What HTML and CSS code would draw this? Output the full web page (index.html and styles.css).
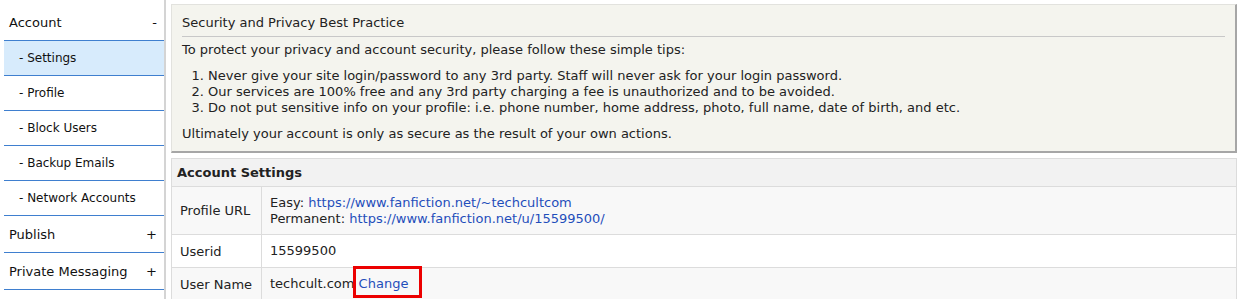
FILE: index.html
```html
<!DOCTYPE html>
<html>
<head>
<meta charset="utf-8">
<link rel="stylesheet" href="styles.css">
</head>
<body>
<div class="page">
  <nav class="sidebar">
    <div class="nav-item top first"><span>Account</span><span class="tog">-</span></div>
    <div class="nav-item sub active"><span>- Settings</span></div>
    <div class="nav-item sub"><span>- Profile</span></div>
    <div class="nav-item sub"><span>- Block Users</span></div>
    <div class="nav-item sub"><span>- Backup Emails</span></div>
    <div class="nav-item sub"><span>- Network Accounts</span></div>
    <div class="nav-item top"><span>Publish</span><span class="tog">+</span></div>
    <div class="nav-item top"><span>Private Messaging</span><span class="tog">+</span></div>
  </nav>
  <main class="main">
    <section class="notice">
      <div class="notice-title">Security and Privacy Best Practice</div>
      <p class="intro">To protect your privacy and account security, please follow these simple tips:</p>
      <ol class="tips">
        <li>Never give your site login/password to any 3rd party. Staff will never ask for your login password.</li>
        <li>Our services are 100% free and any 3rd party charging a fee is unauthorized and to be avoided.</li>
        <li>Do not put sensitive info on your profile: i.e. phone number, home address, photo, full name, date of birth, and etc.</li>
      </ol>
      <p class="outro">Ultimately your account is only as secure as the result of your own actions.</p>
    </section>
    <table class="settings">
      <tr class="head"><th colspan="2">Account Settings</th></tr>
      <tr class="alt">
        <td class="label">Profile URL</td>
        <td class="value">Easy: <a href="#">https://www.fanfiction.net/~techcultcom</a><br>Permanent: <a href="#">https://www.fanfiction.net/u/15599500/</a></td>
      </tr>
      <tr>
        <td class="label">Userid</td>
        <td class="value">15599500</td>
      </tr>
      <tr class="alt">
        <td class="label">User Name</td>
        <td class="value">techcult.com <a href="#" class="highlight">Change</a></td>
      </tr>
    </table>
  </main>
</div>
</body>
</html>
```
FILE: styles.css
```css
* { box-sizing: border-box; }
html, body { margin: 0; padding: 0; background: #fff; }
body {
  font-family: "DejaVu Sans", Verdana, sans-serif;
  font-size: 12px;
  color: #222;
  overflow: hidden;
}
.page {
  display: flex;
  align-items: flex-start;
}
.sidebar {
  width: 166px;
  flex: none;
  padding: 4px 0 0 4px;
  border-right: 2px solid #d4d4d4;
  min-height: 299px;
}
.nav-item {
  display: flex;
  justify-content: space-between;
  align-items: center;
  border-bottom: 1px solid #3f7fcf;
  color: #111;
}
.nav-item.top {
  height: 37px;
  padding: 0 7px 0 5px;
  font-size: 13px;
}
.nav-item.sub {
  height: 35px;
  padding-left: 15px;
}
.nav-item.active { background: #d7ebfc; }
.tog { font-size: 13px; }

.main {
  flex: 1;
  margin-left: 5px;
  margin-right: 4px;
  padding-top: 4px;
}
.notice {
  background: #f4f4ee;
  border: 1px solid #e2e2de;
  border-right: 2px solid #a6a6a6;
  border-bottom: 2px solid #a6a6a6;
  padding: 10px 10px 8px 10px;
  height: 149px;
  font-size: 13px;
  line-height: 16px;
}
.notice-title {
  padding-bottom: 5px;
  border-bottom: 1px solid #c8c8c8;
  margin-bottom: 5px;
}
.notice p { margin: 0; }
.tips {
  margin: 10px 0 10px 0;
  padding-left: 26px;
}
.settings {
  width: 100%;
  margin-top: 5px;
  border-collapse: collapse;
  border: 1px solid #dcdcdc;
  font-size: 13px;
}
.settings th {
  text-align: left;
  background: #f2f2f2;
  font-weight: bold;
  padding: 5px 5px;
  height: 28px;
  border-bottom: 1px solid #dcdcdc;
}
.settings td {
  border-bottom: 1px solid #dcdcdc;
  padding: 7px 8px;
  vertical-align: middle;
}
.settings tr.alt td { background: #f8f8f8; }
.settings td.label {
  width: 90px;
  border-right: 1px solid #dcdcdc;
  white-space: nowrap;
}
.settings td.value { line-height: 16px; }
.settings tr:nth-child(2) td { height: 48px; }
.settings tr:nth-child(3) td { height: 33px; }
.settings tr:nth-child(4) td { height: 33px; }
a { color: #1f4ebb; text-decoration: none; }
.highlight {
  position: relative;
}
.highlight::after {
  content: "";
  position: absolute;
  left: -6px;
  right: -14px;
  top: -10px;
  bottom: -7px;
  border: 3px solid #ec0000;
}
```
